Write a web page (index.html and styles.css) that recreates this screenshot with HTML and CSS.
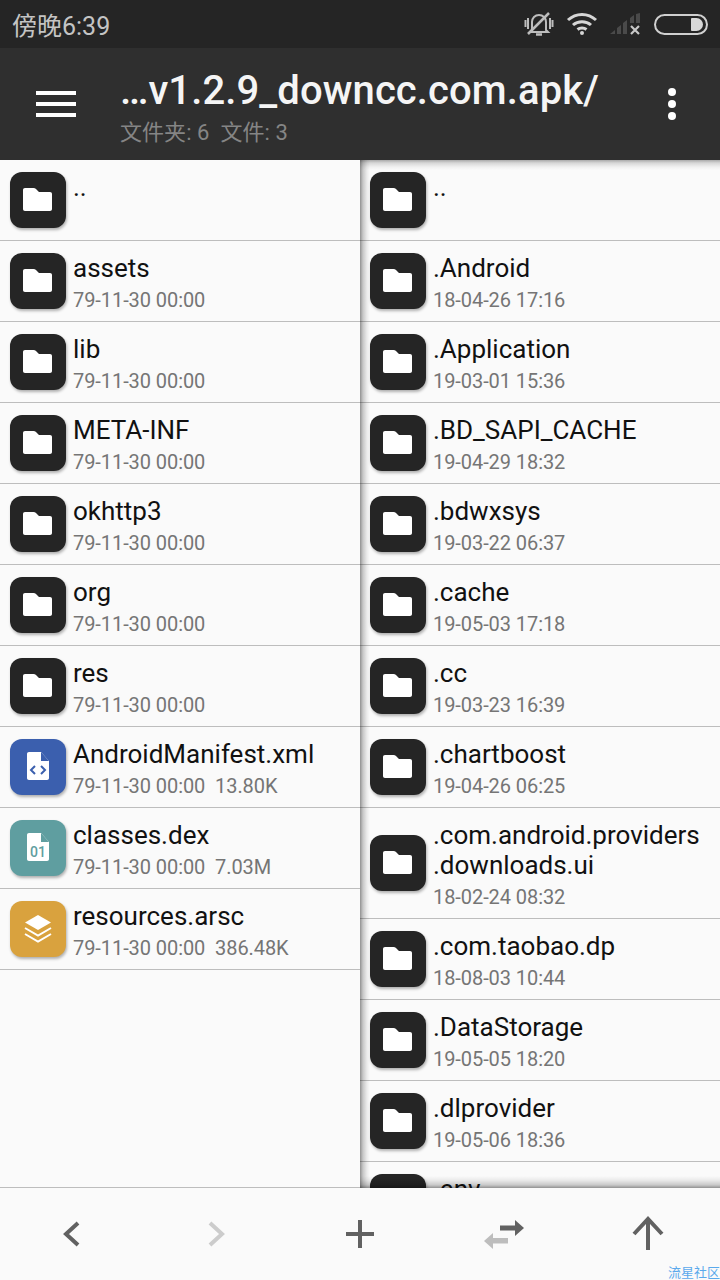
FILE: index.html
```html
<!DOCTYPE html>
<html lang="zh">
<head>
  <meta charset="UTF-8" />
  <meta name="viewport" content="width=device-width, initial-scale=1" />
  <title>文件管理</title>
  <link rel="stylesheet" href="styles.css">
</head>
<body>

<svg class="sprite" aria-hidden="true">
  <symbol id="i-folder" viewBox="0 0 56 56">
    <path d="M15 16h8.500c1 0 1.800.4 2.500 1l3 3h11c1.200 0 2 .8 2 2v15c0 1.200-.8 2-2 2H15c-1.200 0-2-.8-2-2V18c0-1.200.8-2 2-2z" fill="#fff"/>
  </symbol>
</svg>

<div class="app">
  <div class="status-bar">
    <span class="status-time">傍晚6:39</span>
    <div class="status-icons">
      <svg class="st-bell" width="30" height="26" viewBox="0 0 30 26" fill="none" stroke="#bdbdbd">
        <path d="M8 19V11c0-4 3-7 7-7s7 3 7 7v8l2 2H6z" stroke-width="2"/>
        <path d="M12 23.500h6" stroke-width="2.500"/>
        <path d="M1.500 9v7M4 7v11M26 7v11M28.500 9v7" stroke-width="2"/>
        <path d="M4 23L25 2" stroke-width="2.500"/>
      </svg>
      <svg class="st-wifi" width="32" height="24" viewBox="0 0 32 24" fill="none" stroke="#d6d6d6" stroke-width="3">
        <path d="M2 8c8-7.500 20-7.500 28 0"/>
        <path d="M7 13c5-4.500 13-4.500 18 0"/>
        <path d="M11.500 17.500c2.500-2 6.500-2 9 0"/>
        <circle cx="16" cy="21" r="2" fill="#d6d6d6" stroke="none"/>
      </svg>
      <svg class="st-signal" width="32" height="22" viewBox="0 0 32 22">
        <path d="M0 21l5-4v4zM7 15l4-3v9H7zM13 10l4-3v14h-4zM20 5l4-3v8h-4zM26 1l4-1v10h-4z" fill="#4a4a4a"/>
        <path d="M21 13l8 8M29 13l-8 8" stroke="#c8c8c8" stroke-width="2.200"/>
      </svg>
      <div class="st-battery"><span class="st-battery-fill"></span></div>
    </div>
  </div>

  <header class="toolbar">
    <div class="menu-btn"><span></span><span></span><span></span></div>
    <div class="toolbar-title">
      <h1>…v1.2.9_downcc.com.apk/</h1>
      <p>文件夹: 6&nbsp; 文件: 3</p>
    </div>
    <div class="more-btn"><span></span><span></span><span></span></div>
  </header>

  <main class="panes">
    <section class="pane pane-left">
      <div class="row">
        <div class="ic ic-dir"><svg width="56" height="56"><use href="#i-folder"/></svg></div>
        <div class="info"><div class="name">..</div></div>
      </div>
      <div class="row">
        <div class="ic ic-dir"><svg width="56" height="56"><use href="#i-folder"/></svg></div>
        <div class="info"><div class="name">assets</div><div class="meta">79-11-30 00:00</div></div>
      </div>
      <div class="row">
        <div class="ic ic-dir"><svg width="56" height="56"><use href="#i-folder"/></svg></div>
        <div class="info"><div class="name">lib</div><div class="meta">79-11-30 00:00</div></div>
      </div>
      <div class="row">
        <div class="ic ic-dir"><svg width="56" height="56"><use href="#i-folder"/></svg></div>
        <div class="info"><div class="name">META-INF</div><div class="meta">79-11-30 00:00</div></div>
      </div>
      <div class="row">
        <div class="ic ic-dir"><svg width="56" height="56"><use href="#i-folder"/></svg></div>
        <div class="info"><div class="name">okhttp3</div><div class="meta">79-11-30 00:00</div></div>
      </div>
      <div class="row">
        <div class="ic ic-dir"><svg width="56" height="56"><use href="#i-folder"/></svg></div>
        <div class="info"><div class="name">org</div><div class="meta">79-11-30 00:00</div></div>
      </div>
      <div class="row">
        <div class="ic ic-dir"><svg width="56" height="56"><use href="#i-folder"/></svg></div>
        <div class="info"><div class="name">res</div><div class="meta">79-11-30 00:00</div></div>
      </div>
      <div class="row">
        <div class="ic ic-xml">
          <svg width="56" height="56" viewBox="0 0 56 56">
            <path d="M19 13h12l8 9v17c0 1-.8 2-2 2H19c-1.200 0-2-1-2-2V15c0-1.200.8-2 2-2z" fill="#fff"/>
            <path d="M31 13l8 9h-8z" fill="#3b5fae"/>
            <path d="M25 27l-4 4 4 4M31 27l4 4-4 4" fill="none" stroke="#3b5fae" stroke-width="2"/>
          </svg>
        </div>
        <div class="info"><div class="name">AndroidManifest.xml</div><div class="meta">79-11-30 00:00&nbsp; 13.80K</div></div>
      </div>
      <div class="row">
        <div class="ic ic-dex">
          <svg width="56" height="56" viewBox="0 0 56 56">
            <path d="M19 13h12l8 9v17c0 1-.8 2-2 2H19c-1.200 0-2-1-2-2V15c0-1.200.8-2 2-2z" fill="#fff"/>
            <path d="M31 13l8 9h-8z" fill="#5f9ea0"/>
            <text x="28" y="37" text-anchor="middle" class="ic-text">01</text>
          </svg>
        </div>
        <div class="info"><div class="name">classes.dex</div><div class="meta">79-11-30 00:00&nbsp; 7.03M</div></div>
      </div>
      <div class="row">
        <div class="ic ic-arsc">
          <svg width="56" height="56" viewBox="0 0 56 56">
            <path d="M28 14l13 7.500L28 29l-13-7.500z" fill="#fff"/>
            <path d="M15 27l13 7.500L41 27M15 33l13 7.500L41 33" fill="none" stroke="#fff" stroke-width="2"/>
          </svg>
        </div>
        <div class="info"><div class="name">resources.arsc</div><div class="meta">79-11-30 00:00&nbsp; 386.48K</div></div>
      </div>
    </section>

    <section class="pane pane-right">
      <div class="row">
        <div class="ic ic-dir"><svg width="56" height="56"><use href="#i-folder"/></svg></div>
        <div class="info"><div class="name">..</div></div>
      </div>
      <div class="row">
        <div class="ic ic-dir"><svg width="56" height="56"><use href="#i-folder"/></svg></div>
        <div class="info"><div class="name">.Android</div><div class="meta">18-04-26 17:16</div></div>
      </div>
      <div class="row">
        <div class="ic ic-dir"><svg width="56" height="56"><use href="#i-folder"/></svg></div>
        <div class="info"><div class="name">.Application</div><div class="meta">19-03-01 15:36</div></div>
      </div>
      <div class="row">
        <div class="ic ic-dir"><svg width="56" height="56"><use href="#i-folder"/></svg></div>
        <div class="info"><div class="name">.BD_SAPI_CACHE</div><div class="meta">19-04-29 18:32</div></div>
      </div>
      <div class="row">
        <div class="ic ic-dir"><svg width="56" height="56"><use href="#i-folder"/></svg></div>
        <div class="info"><div class="name">.bdwxsys</div><div class="meta">19-03-22 06:37</div></div>
      </div>
      <div class="row">
        <div class="ic ic-dir"><svg width="56" height="56"><use href="#i-folder"/></svg></div>
        <div class="info"><div class="name">.cache</div><div class="meta">19-05-03 17:18</div></div>
      </div>
      <div class="row">
        <div class="ic ic-dir"><svg width="56" height="56"><use href="#i-folder"/></svg></div>
        <div class="info"><div class="name">.cc</div><div class="meta">19-03-23 16:39</div></div>
      </div>
      <div class="row">
        <div class="ic ic-dir"><svg width="56" height="56"><use href="#i-folder"/></svg></div>
        <div class="info"><div class="name">.chartboost</div><div class="meta">19-04-26 06:25</div></div>
      </div>
      <div class="row">
        <div class="ic ic-dir"><svg width="56" height="56"><use href="#i-folder"/></svg></div>
        <div class="info"><div class="name">.com.android.providers<br>.downloads.ui</div><div class="meta">18-02-24 08:32</div></div>
      </div>
      <div class="row">
        <div class="ic ic-dir"><svg width="56" height="56"><use href="#i-folder"/></svg></div>
        <div class="info"><div class="name">.com.taobao.dp</div><div class="meta">18-08-03 10:44</div></div>
      </div>
      <div class="row">
        <div class="ic ic-dir"><svg width="56" height="56"><use href="#i-folder"/></svg></div>
        <div class="info"><div class="name">.DataStorage</div><div class="meta">19-05-05 18:20</div></div>
      </div>
      <div class="row">
        <div class="ic ic-dir"><svg width="56" height="56"><use href="#i-folder"/></svg></div>
        <div class="info"><div class="name">.dlprovider</div><div class="meta">19-05-06 18:36</div></div>
      </div>
      <div class="row">
        <div class="ic ic-dir"><svg width="56" height="56"><use href="#i-folder"/></svg></div>
        <div class="info"><div class="name">.env</div></div>
      </div>
    </section>
  </main>

  <footer class="bottom-bar">
    <svg width="48" height="48" viewBox="0 0 48 48" fill="none" stroke="#616161" stroke-width="4"><path d="M30 13L18 24l12 11"/></svg>
    <svg width="48" height="48" viewBox="0 0 48 48" fill="none" stroke="#cccccc" stroke-width="4"><path d="M18 13l12 11-12 11"/></svg>
    <svg width="48" height="48" viewBox="0 0 48 48" fill="none" stroke="#616161" stroke-width="4"><path d="M24 10v28M10 24h28"/></svg>
    <svg width="48" height="48" viewBox="0 0 48 48">
      <path d="M20 15.500h15V10l9 8-9 8v-5.500H20z" fill="#616161"/>
      <path d="M28 28H13v-5l-9 8 9 8v-5.500h15z" fill="#bdbdbd"/>
    </svg>
    <svg width="48" height="48" viewBox="0 0 48 48" fill="none" stroke="#616161" stroke-width="4"><path d="M24 40V9M10 24L24 9l14 15"/></svg>
    <span class="watermark">流星社区</span>
  </footer>
</div>

</body>
</html>
```

FILE: styles.css
```css
* {
  box-sizing: border-box;
}

html, body {
  margin: 0;
  height: 100%;
}

body {
  font-family: Roboto, "Noto Sans CJK SC", sans-serif;
  background: #fafafa;
  color: #111;
}

.sprite {
  display: none;
}

.app {
  width: 720px;
  height: 1280px;
  display: flex;
  flex-direction: column;
  overflow: hidden;
}

/* Barra de estado */
.status-bar {
  height: 48px;
  flex: none;
  background: #252525;
  display: flex;
  align-items: center;
  justify-content: space-between;
  padding: 0 12px;
}

.status-time {
  font-size: 25px;
  color: #c4c4c4;
}

.status-icons {
  display: flex;
  align-items: center;
  gap: 12px;
}

.st-battery {
  width: 54px;
  height: 21px;
  border: 2px solid #d0d0d0;
  border-radius: 11px;
  display: flex;
  justify-content: flex-end;
  padding: 2px 3px;
}

.st-battery-fill {
  width: 12px;
  background: #d8d8d8;
  border-radius: 1px 7px 7px 1px;
}

/* Toolbar */
.toolbar {
  height: 112px;
  flex: none;
  background: #2f2f2f;
  display: flex;
  align-items: center;
}

.menu-btn {
  width: 120px;
  flex: none;
  display: flex;
  flex-direction: column;
  gap: 7px;
  padding-left: 36px;
}

.menu-btn span {
  width: 40px;
  height: 4px;
  background: #fff;
}

.toolbar-title {
  flex-grow: 1;
  padding-top: 7px;
}

.toolbar-title h1 {
  margin: 0;
  font-size: 40px;
  line-height: 46px;
  font-weight: 500;
  letter-spacing: 0.1px;
  color: #f5f5f5;
}

.toolbar-title p {
  margin: 5px 0 0;
  font-size: 22px;
  line-height: 28px;
  letter-spacing: 0.05px;
  color: #858585;
}

.more-btn {
  width: 96px;
  flex: none;
  display: flex;
  flex-direction: column;
  align-items: center;
  gap: 4px;
}

.more-btn span {
  width: 8px;
  height: 8px;
  border-radius: 50%;
  background: #fff;
}

/* Listas */
.panes {
  flex: 1;
  min-height: 0;
  display: grid;
  grid-template-columns: 360px 360px;
  overflow: hidden;
}

.pane {
  overflow: hidden;
}

.pane-left {
  border-bottom: 1px solid #bdbdbd;
}

.pane-right {
  position: relative;
}

/* sombra interior del panel inactivo */
.pane-right::after {
  content: "";
  position: absolute;
  top: 0;
  left: 0;
  right: 0;
  bottom: 0;
  pointer-events: none;
  background:
    linear-gradient(to right, rgba(0,0,0,0.42), rgba(0,0,0,0.2) 3px, rgba(0,0,0,0.06) 7px, rgba(0,0,0,0) 10px),
    linear-gradient(to bottom, rgba(0,0,0,0.32), rgba(0,0,0,0.14) 3px, rgba(0,0,0,0.04) 7px, rgba(0,0,0,0) 10px),
    linear-gradient(to top, rgba(0,0,0,0.42), rgba(0,0,0,0.2) 3px, rgba(0,0,0,0.06) 8px, rgba(0,0,0,0) 12px);
}

.row {
  display: flex;
  align-items: center;
  gap: 7px;
  min-height: 81px;
  padding: 12px 0 8px 10px;
  border-bottom: 1px solid #bdbdbd;
}

.ic {
  width: 56px;
  height: 56px;
  flex: none;
  border-radius: 12px;
  box-shadow: 1px 2px 3px rgba(0,0,0,0.3);
  margin-top: -4px;
}

.ic svg {
  display: block;
}

.ic-dir { background: #252525; }
.ic-xml { background: #3b5fae; }
.ic-dex { background: #5f9ea0; }
.ic-arsc { background: #d9a23e; }

.ic-text {
  font-family: Roboto, sans-serif;
  font-size: 14px;
  font-weight: 500;
  fill: #5f9ea0;
}

.info {
  align-self: flex-start;
}

.name {
  font-size: 26px;
  line-height: 30px;
}

.meta {
  margin-top: 4px;
  font-size: 20px;
  line-height: 26px;
  letter-spacing: -0.07px;
  color: #757575;
}

/* Barra inferior */
.bottom-bar {
  height: 92px;
  flex: none;
  background: #fafafa;
  display: grid;
  grid-template-columns: repeat(5, 1fr);
  justify-items: center;
  align-items: center;
  position: relative;
}

.watermark {
  position: absolute;
  right: 0;
  bottom: 0;
  font-size: 13px;
  line-height: 14px;
  color: #5aa9ec;
}
```
